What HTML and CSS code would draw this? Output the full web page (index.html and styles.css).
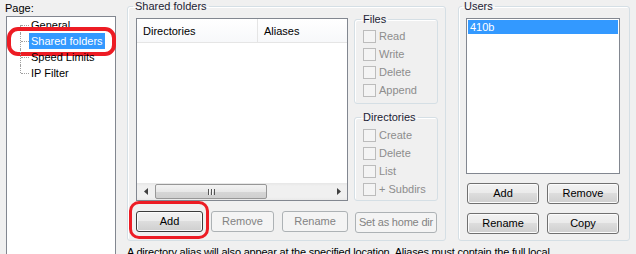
FILE: index.html
```html
<!DOCTYPE html>
<html lang="en">
<head>
    <meta charset="UTF-8">
    <title>Shared folders</title>
    <link rel="stylesheet" href="styles.css">
</head>
<body>

    <div class="window">
        <div class="page-col">
            <div class="page-label">Page:</div>
            <div class="tree">
                <div class="tree-item first">General</div>
                <div class="tree-item">
                    <span class="selected">Shared folders</span>
                    <span class="mark mark-tree"></span>
                </div>
                <div class="tree-item">Speed Limits</div>
                <div class="tree-item last">IP Filter</div>
            </div>
        </div>

        <div class="main-col">
            <div class="groups">
                <fieldset class="group shared">
                    <legend>Shared folders</legend>
                    <div class="shared-body">
                        <div class="dir-col">
                            <div class="listview">
                                <div class="lv-header">
                                    <div class="lv-col dirs">Directories</div>
                                    <div class="lv-col aliases">Aliases</div>
                                </div>
                                <div class="lv-body"></div>
                                <div class="hscroll">
                                    <span class="arrow">
                                        <svg width="4" height="7" viewBox="0 0 4 7"><path d="M4 0 L0 3.5 L4 7 Z" fill="#404040"/></svg>
                                    </span>
                                    <div class="track">
                                        <div class="thumb"><span class="grip"></span></div>
                                    </div>
                                    <span class="arrow">
                                        <svg width="4" height="7" viewBox="0 0 4 7"><path d="M0 0 L4 3.5 L0 7 Z" fill="#404040"/></svg>
                                    </span>
                                </div>
                            </div>
                            <div class="btn-row">
                                <div class="mark-wrap">
                                    <button class="btn btn-add focused">Add</button>
                                    <span class="mark mark-add"></span>
                                </div>
                                <button class="btn btn-remove" disabled>Remove</button>
                                <button class="btn btn-rename" disabled>Rename</button>
                            </div>
                        </div>

                        <div class="perm-col">
                            <fieldset class="group sub">
                                <legend>Files</legend>
                                <label class="check"><span class="box"></span>Read</label>
                                <label class="check"><span class="box"></span>Write</label>
                                <label class="check"><span class="box"></span>Delete</label>
                                <label class="check"><span class="box"></span>Append</label>
                            </fieldset>
                            <fieldset class="group sub dirs-group">
                                <legend>Directories</legend>
                                <label class="check"><span class="box"></span>Create</label>
                                <label class="check"><span class="box"></span>Delete</label>
                                <label class="check"><span class="box"></span>List</label>
                                <label class="check"><span class="box"></span>+ Subdirs</label>
                            </fieldset>
                            <button class="btn btn-home" disabled>Set as home dir</button>
                        </div>
                    </div>
                </fieldset>

                <fieldset class="group users">
                    <legend>Users</legend>
                    <div class="user-list">
                        <div class="user selected">410b</div>
                    </div>
                    <div class="user-buttons">
                        <button class="btn">Add</button>
                        <button class="btn">Remove</button>
                        <button class="btn">Rename</button>
                        <button class="btn">Copy</button>
                    </div>
                </fieldset>
            </div>

            <p class="note">A directory alias will also appear at the specified location. Aliases must contain the full local</p>
        </div>
    </div>

</body>
</html>
```

FILE: styles.css
```css
body {
    margin: 0;
    background: #f0f0f0;
    font-family: "Liberation Sans", Arial, sans-serif;
    font-size: 11px;
    line-height: 13px;
    color: #000;
    overflow: hidden;
}

.window {
    display: flex;
    height: 254px;
    overflow: hidden;
}

/* left page tree */
.page-col {
    width: 111px;
    padding-left: 5px;
    display: flex;
    flex-direction: column;
}

.page-label {
    height: 13px;
    padding-top: 2px;
    margin-bottom: 1px;
}

.tree {
    flex: 1;
    margin-left: 1px;
    width: 110px;
    box-sizing: border-box;
    border: 1px solid #828790;
    border-bottom: none;
    background: #fff;
}

.tree-item {
    position: relative;
    height: 16px;
    line-height: 16px;
    padding-left: 24px;
    white-space: nowrap;
}

.tree-item::before {
    content: "";
    position: absolute;
    left: 13px;
    top: 0;
    bottom: 0;
    border-left: 1px dotted #a0a0a0;
}

.tree-item.first::before {
    top: 8px;
}

.tree-item.last::before {
    bottom: 8px;
}

.tree-item::after {
    content: "";
    position: absolute;
    left: 14px;
    top: 8px;
    width: 8px;
    border-top: 1px dotted #a0a0a0;
}

.tree-item .selected {
    display: inline-block;
    margin-left: -2px;
    padding: 0 2px;
    background: #3399ff;
    color: #fff;
    height: 16px;
}

/* red marker rings */
.mark {
    position: absolute;
    border: 4px solid #ed1c24;
    border-radius: 11px;
    pointer-events: none;
}

.mark-tree {
    left: 0;
    right: -1px;
    top: -6px;
    bottom: -7px;
}

.mark-wrap {
    position: relative;
}

.mark-add {
    left: -7px;
    right: -6px;
    top: -10px;
    bottom: -7px;
    border-width: 3px;
    border-radius: 10px;
}

/* main area */
.main-col {
    margin-left: 11px;
}

.groups {
    display: flex;
    gap: 12px;
}

.group {
    margin: 0;
    min-width: 0;
    border: 1px solid #d5dfe5;
    border-radius: 3px;
    box-shadow: inset 1px 1px 0 #fff;
    box-sizing: border-box;
}

.group legend {
    padding: 0 2px;
    line-height: 13px;
    color: #1c1c34;
}

.shared {
    width: 319px;
    height: 241px;
    padding: 0 7px 0 8px;
}

.shared legend {
    margin-left: -3px;
}

.shared-body {
    display: flex;
    gap: 6px;
}

.dir-col {
    width: 212px;
}

.listview {
    margin-top: 5px;
    height: 183px;
    box-sizing: border-box;
    border: 1px solid #828790;
    background: #fff;
    display: flex;
    flex-direction: column;
}

.lv-header {
    display: flex;
    height: 23px;
    border-bottom: 1px solid #e5e5e5;
    background: linear-gradient(#fff, #f7f8fa);
}

.lv-col {
    line-height: 24px;
    padding-left: 6px;
}

.lv-col.dirs {
    width: 114px;
    border-right: 1px solid #e5e5e5;
}

.lv-body {
    flex: 1;
}

.hscroll {
    height: 17px;
    display: flex;
    align-items: center;
    background: linear-gradient(#e6e6e6, #f0f0f0 3px, #f0f0f0 14px, #e9e9e9);
}

.hscroll .arrow {
    width: 17px;
    display: flex;
    justify-content: center;
}

.hscroll .track {
    flex: 1;
    padding-left: 1px;
}

.thumb {
    width: 110px;
    height: 13px;
    border: 1px solid #979797;
    border-radius: 2px;
    background: linear-gradient(#f3f3f3, #e8e8e8 50%, #d6d6d6 51%, #cfcfcf);
    display: flex;
    align-items: center;
    justify-content: center;
}

.grip {
    width: 7px;
    height: 6px;
    background: repeating-linear-gradient(90deg, #555 0 1px, #f6f6f6 1px 2px, transparent 2px 3px);
}

.btn-row {
    display: flex;
    gap: 8px;
    margin-top: 10px;
}

/* buttons */
.btn {
    height: 21px;
    padding: 0;
    font: inherit;
    color: #000;
    border: 1px solid #707070;
    border-radius: 3px;
    background: linear-gradient(#f2f2f2, #ebebeb 45%, #dddddd 50%, #cfcfcf);
    box-shadow: inset 0 0 0 1px #fbfbfb;
}

.btn.focused {
    border-color: #3c3c3c;
}

.btn:disabled {
    color: #838383;
    border-color: #adb2b5;
    background: #f4f4f4;
    box-shadow: none;
}

.btn-add {
    width: 67px;
}

.btn-remove {
    width: 63px;
}

.btn-rename {
    width: 66px;
}

.btn-home {
    width: 82px;
    margin: 11px 0 0 1px;
    letter-spacing: -0.2px;
    white-space: nowrap;
}

/* permissions */
.perm-col {
    width: 84px;
}

.sub {
    width: 84px;
    padding: 1px 4px 4px 8px;
}

.sub legend {
    margin-left: -2px;
}

.dirs-group {
    margin-top: 7px;
    padding-top: 2px;
    padding-bottom: 2px;
}

.check {
    display: flex;
    align-items: center;
    height: 18px;
    color: #8d8d8d;
    white-space: nowrap;
}

.check .box {
    width: 13px;
    height: 13px;
    box-sizing: border-box;
    border: 1px solid #bcbcbc;
    background: #f4f4f4;
    margin-right: 3px;
}

/* users */
.users {
    width: 172px;
    height: 241px;
    padding: 0 9px 0 7px;
}

.users legend {
    margin-left: -4px;
}

.user-list {
    margin-top: 5px;
    height: 156px;
    box-sizing: border-box;
    border: 1px solid #828790;
    background: #fff;
    padding: 1px;
}

.user {
    height: 14px;
    line-height: 14px;
    padding-left: 2px;
}

.user.selected {
    background: #3399ff;
    color: #fff;
}

.user-buttons {
    display: grid;
    grid-template-columns: 72px 72px;
    gap: 9px 8px;
    margin: 9px 0 0 1px;
}

.note {
    margin: 5px 0 0;
    white-space: nowrap;
    letter-spacing: -0.2px;
}
```
